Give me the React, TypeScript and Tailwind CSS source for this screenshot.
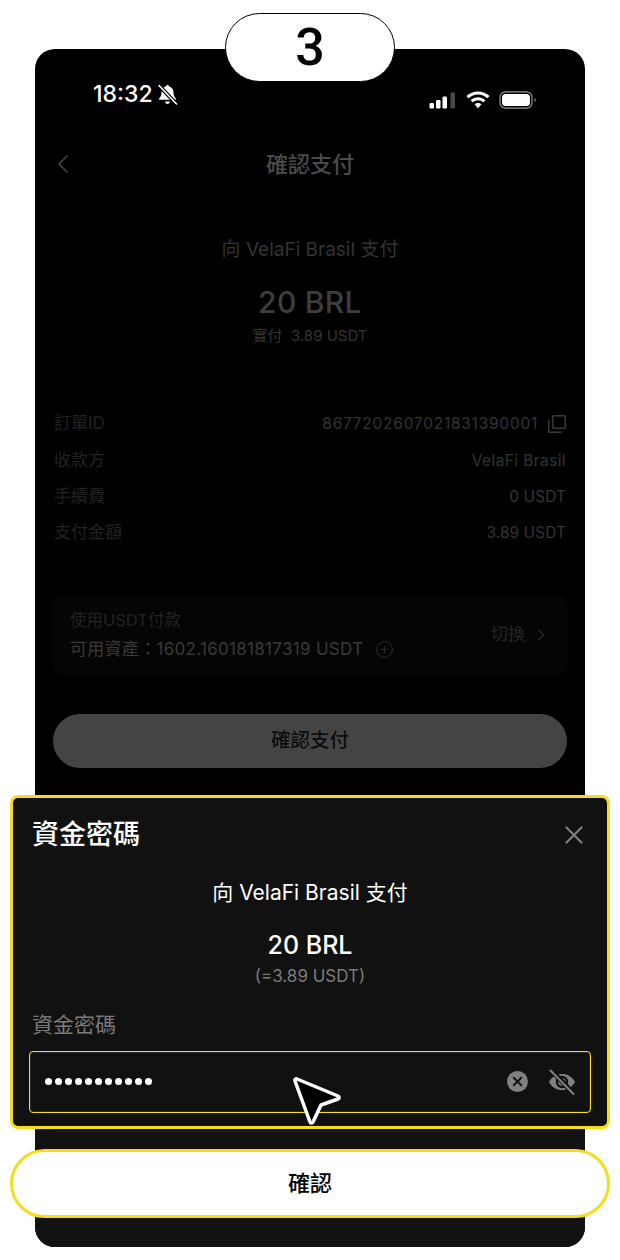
import { ChevronLeft, ChevronRight, CirclePlus, X } from "lucide-react";

const FONT = "[font-family:Inter,'Noto_Sans_CJK_TC',sans-serif]";

const rows = [
  { label: "訂單ID", value: "8677202607021831390001", copy: true, track: "tracking-[0.75px]" },
  { label: "收款方", value: "VelaFi Brasil", track: "tracking-[0.4px]" },
  { label: "手續費", value: "0 USDT", track: "tracking-[0.05px]" },
  { label: "支付金額", value: "3.89 USDT", track: "tracking-[0.05px]" },
];

function SilentBell() {
  return (
    <svg width="21" height="21" viewBox="0 0 21 21">
      <path d="M10.500 1c.9 0 1.500.6 1.600 1.400 2.900.7 4.400 3 4.400 6 0 3 .8 4.500 2.300 6 .5.600.1 1.400-.7 1.400H2.900c-.8 0-1.200-.8-.7-1.400 1.500-1.500 2.300-3 2.300-6 0-3 1.500-5.300 4.400-6 .1-.8.7-1.400 1.600-1.400z" fill="#fff" />
      <path d="M8 17.500h5c-.2 1.400-1.200 2.500-2.500 2.500S8.200 18.900 8 17.500z" fill="#fff" />
      <path d="M2 1.500 19.500 20" stroke="#000" strokeWidth="4" />
      <path d="M2 1.500 19.500 20" stroke="#fff" strokeWidth="1.600" strokeLinecap="round" />
    </svg>
  );
}

function StatusIcons() {
  return (
    <div className="flex items-center">
      {/* signal */}
      <svg width="27" height="17" viewBox="0 0 27 17">
        <rect x="0.500" y="11" width="4.500" height="5.500" rx="1.200" fill="#fff" />
        <rect x="7" y="8" width="4.500" height="8.500" rx="1.200" fill="#fff" />
        <rect x="13.500" y="4.500" width="4.500" height="12" rx="1.200" fill="#fff" />
        <rect x="21.500" y="0.500" width="4.500" height="16" rx="1.200" fill="#4a4a4a" />
      </svg>
      {/* wifi */}
      <svg width="24" height="18" viewBox="0 0 24 18" className="ml-[10px]">
        <path d="M1.500 6.200C7.500.6 16.500.6 22.500 6.200" fill="none" stroke="#fff" strokeWidth="3" />
        <path d="M5.600 10.200c3.700-3.400 9.100-3.400 12.800 0" fill="none" stroke="#fff" strokeWidth="3" />
        <path d="M8.600 13.200c2-1.600 4.800-1.600 6.800 0L12 17.200z" fill="#fff" />
      </svg>
      <svg width="38" height="18" viewBox="0 0 38 18" className="ml-[9px]">
        <rect x="1" y="0.800" width="32" height="16.400" rx="5.500" fill="none" stroke="#9a9a9a" strokeWidth="1.200" />
        <rect x="3" y="3" width="28" height="12" rx="3.500" fill="#fff" />
        <path d="M35.500 7v4c.9-.4 1.300-1.100 1.300-2s-.4-1.600-1.300-2z" fill="#7a7a7a" />
      </svg>
    </div>
  );
}

function CopyMark() {
  return (
    <svg width="18" height="18" viewBox="0 0 18 18" fill="none" stroke="#3a3a3a" strokeWidth="1.400">
      <rect x="4.700" y="0.700" width="12.600" height="12.600" rx="1" />
      <path d="M0.700 4.500v12.800h12.800" />
    </svg>
  );
}

function EyeOff() {
  return (
    <svg width="28" height="26" viewBox="0 0 28 26">
      <path d="M1 13C4 7.500 8.500 5 14 5s10 2.500 13 8c-3 5.500-7.500 8-13 8S4 18.500 1 13z" fill="#808080" />
      <circle cx="14" cy="13" r="5" fill="none" stroke="#111" strokeWidth="2.400" />
      <path d="M3.500 1.500 25 24" stroke="#111" strokeWidth="5" />
      <path d="M2.500 1.500 25.500 25" stroke="#808080" strokeWidth="2" strokeLinecap="round" />
    </svg>
  );
}

export default function App() {
  return (
    <div className={`relative h-[1260px] w-[620px] overflow-hidden bg-white pt-[49px] ${FONT}`}>
      {/* step badge */}
      <div className="absolute left-[225px] top-[13px] z-10 flex h-[69px] w-[170px] items-center justify-center rounded-[35px] border border-black bg-white text-[52px] font-medium leading-none text-black [font-family:Roboto,sans-serif]">
        3
      </div>

      <div className="mx-[35px] flex h-[1198px] w-[550px] flex-col rounded-[20px] bg-black">
        {/* status bar */}
        <div className="flex h-[61px] items-end justify-between pb-[1px] pl-[58px] pr-[48px]">
          <div className="flex items-center gap-[4px]">
            <span className="text-[23px] font-medium leading-[30px] text-white">18:32</span>
            <SilentBell />
          </div>
          <StatusIcons />
        </div>

        {/* nav */}
        <div className="relative mt-[37px] flex h-[34px] items-center justify-center">
          <ChevronLeft className="absolute left-[12px] h-[32px] w-[32px] text-[#444]" strokeWidth={1.25} />
          <span className="text-[22px] font-medium text-[#4b4b4b]">確認支付</span>
        </div>

        {/* summary */}
        <div className="mt-[56px] flex flex-col items-center">
          <div className="text-[19px] leading-[26px] text-[#333]">向 VelaFi Brasil 支付</div>
          <div className="mt-[22px] text-[30px] font-medium leading-[34px] tracking-[0.3px] text-[#3e3e3e]">20 BRL</div>
          <div className="mt-[7px] text-[15px] leading-[20px] text-[#333]">實付&nbsp; 3.89 USDT</div>
        </div>

        {/* details */}
        <div className="mt-[66px] flex flex-col gap-[12.330px] px-[19px]">
          {rows.map((row) => (
            <div key={row.label} className="flex h-[24px] items-center justify-between text-[17px]">
              <span className="text-[#222]">{row.label}</span>
              <span className={`flex items-center gap-[10px] text-[15.500px] text-[#343434] ${row.track}`}>
                {row.value}
                {row.copy && <CopyMark />}
              </span>
            </div>
          ))}
        </div>

        {/* pay method */}
        <div className="mx-[18px] mt-[50px] flex h-[80px] items-center justify-between rounded-[10px] bg-[#050505] pl-[17px] pr-[16px]">
          <div className="flex flex-col gap-[5px]">
            <span className="text-[16.500px] leading-[24px] text-[#222]">使用USDT付款</span>
            <span className="flex items-center gap-[12px] text-[17px] leading-[24px] tracking-[0.3px] text-[#3a3a3a]">
              可用資產：1602.160181817319 USDT
              <CirclePlus className="h-[19px] w-[19px] text-[#2c2c2c]" strokeWidth={1.25} />
            </span>
          </div>
          <span className="flex items-center gap-[6px] text-[17px] text-[#262626]">
            切換
            <ChevronRight className="h-[20px] w-[20px]" strokeWidth={1.5} />
          </span>
        </div>

        <div className="mx-[18px] mt-[39px] flex h-[54px] shrink-0 items-center justify-center rounded-[27px] bg-[#444] text-[19.500px] font-medium text-[#0c0c0c]">
          確認支付
        </div>

        {/* password sheet */}
        <div className="-mx-[25px] mt-[27px] h-[334px] shrink-0 rounded-[8px] border-[3px] border-[#f5dc1c] bg-[#111] px-[19px]">
          <div className="flex h-[75px] items-center justify-between">
            <span className="text-[27px] font-medium leading-[36px] text-white">資金密碼</span>
            <X className="-mr-[1px] h-[30px] w-[30px] text-[#808080]" strokeWidth={1.75} />
          </div>
          <div className="flex flex-col items-center">
            <div className="mt-[6px] text-[21px] leading-[28px] text-white">向 VelaFi Brasil 支付</div>
            <div className="mt-[23px] text-[25px] font-medium leading-[30px] text-white">20 BRL</div>
            <div className="mt-[5px] text-[17px] leading-[22px] text-[#7a7a7a]">(=3.89 USDT)</div>
          </div>
          <div className="mt-[23px] text-[21px] leading-[30px] text-[#7a7a7a]">資金密碼</div>
          <div className="-ml-[3px] -mr-[3px] mt-[11px] flex h-[62px] items-center justify-between rounded-[4px] border border-[#f5dc1c] pl-[15px] pr-[14px] shadow-[inset_0_0_0_1px_#2a2a2a]">
            <span className="flex gap-[3px] pb-[1px]">
              {Array.from({ length: 11 }).map((_, i) => (
                <span key={i} className="h-[7px] w-[7px] rounded-full bg-white" />
              ))}
            </span>
            <div className="flex items-center gap-[20px]">
              <span className="flex h-[21px] w-[21px] items-center justify-center rounded-full bg-[#808080]">
                <X className="h-[15px] w-[15px] text-[#111]" strokeWidth={3} />
              </span>
              <EyeOff />
            </div>
          </div>
        </div>

        {/* rest of the sheet behind the modal */}
        <div className="flex flex-1 flex-col rounded-b-[20px] bg-[#121212]">
          <div className="mx-[20px] h-[3px] rounded-b-[6px] border-b border-[#222]" />
          <div className="-mx-[25px] mt-[17px] flex h-[69px] shrink-0 items-center justify-center rounded-[35px] border-[3px] border-[#f5dc1c] bg-white text-[22px] font-medium text-black">
            確認
          </div>
        </div>
      </div>

      {/* pointer */}
      <svg className="absolute left-[291px] top-[1074px] z-10" width="52" height="54" viewBox="0 0 52 54">
        <path
          d="M6 5 47 22c1.500.700 1.400 2.500 0 3L30 31 22 48c-.700 1.500-2.500 1.400-3 0L4 7c-.500-1.500.600-2.600 2-2z"
          fill="#000"
          stroke="#fff"
          strokeWidth="3.500"
          strokeLinejoin="round"
        />
      </svg>
    </div>
  );
}
